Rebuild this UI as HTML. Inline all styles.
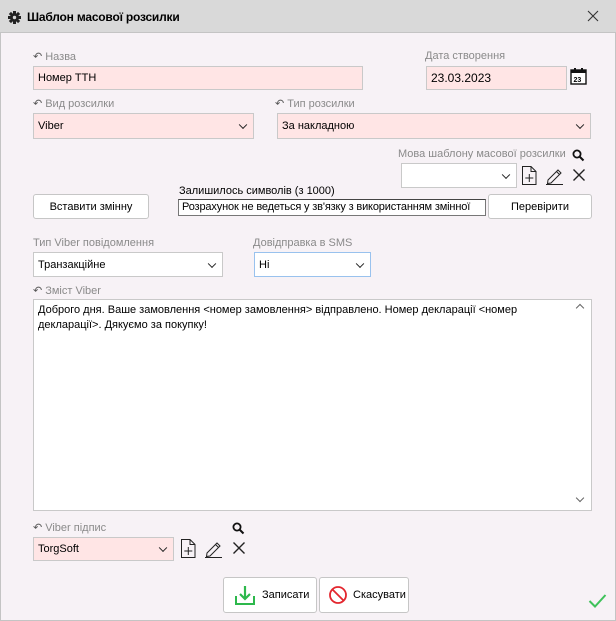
<!DOCTYPE html>
<html><head><meta charset="utf-8"><style>
*{box-sizing:border-box;margin:0;padding:0}
body{width:616px;height:621px;background:#f7f2f6;font-family:"Liberation Sans",sans-serif;font-size:11px;color:#000;position:relative;overflow:hidden}
.a{position:absolute}
.lbl{position:absolute;color:#8a8a8a;font-size:11px;white-space:nowrap}
.in{position:absolute;border:1px solid #c9c9c9;background:#ffe5e5;padding-left:4px;display:flex;align-items:center;white-space:nowrap;overflow:hidden}
.w{background:#fff}
.chev{position:absolute;right:7px;top:50%;width:6px;height:6px;border-right:1.6px solid #222;border-bottom:1.6px solid #222;transform:translateY(-70%) rotate(45deg)}
.btn{position:absolute;border:1px solid #c6c6c6;border-radius:3px;background:#fff;display:flex;align-items:center;justify-content:center;font-size:11px}
.ar{display:inline-block;margin-right:3px;color:#555}
</style></head><body>
<div class="a" style="left:0;top:0;width:616px;height:33px;background:#d9d9d9;border-bottom:1px solid #c4c4c4"></div>
<svg class="a" style="left:8px;top:11px" width="13" height="13" viewBox="0 0 13 13"><g fill="#222"><circle cx="6.5" cy="6.5" r="4.3"/><rect x="5" y="0" width="3" height="13"/><rect x="0" y="5" width="13" height="3"/><rect x="5" y="0" width="3" height="13" transform="rotate(45 6.5 6.5)"/><rect x="5" y="0" width="3" height="13" transform="rotate(-45 6.5 6.5)"/></g><circle cx="6.5" cy="6.5" r="1.7" fill="#d9d9d9"/></svg>
<div class="a" style="left:27px;top:10px;font-weight:bold;font-size:12px;letter-spacing:-0.2px">Шаблон масової розсилки</div>
<svg class="a" style="left:587px;top:10px" width="12" height="12"><path d="M1 1L11 11M11 1L1 11" stroke="#333" stroke-width="1.1"/></svg>
<div class="a" style="left:0;top:33px;width:1px;height:588px;background:#c4c4c4"></div>
<div class="a" style="right:0;top:33px;width:1px;height:588px;background:#c4c4c4"></div>
<div class="a" style="left:0;bottom:0;width:616px;height:1px;background:#c4c4c4"></div>

<div class="lbl" style="left:33px;top:50px"><span class="ar">↶</span>Назва</div>
<div class="in" style="left:33px;top:66px;width:330px;height:24px">Номер ТТН</div>
<div class="lbl" style="left:425px;top:50px">Дата створення</div>
<div class="in" style="left:426px;top:66px;width:141px;height:24px;font-size:12px">23.03.2023</div>
<svg class="a" style="left:570px;top:67px" width="17" height="18"><rect x="1" y="3" width="15" height="14" fill="#fff" stroke="#111" stroke-width="1.4"/><rect x="1" y="3" width="15" height="3" fill="#111"/><rect x="4" y="1" width="2" height="3" fill="#111"/><rect x="11" y="1" width="2" height="3" fill="#111"/><text x="3.5" y="15" font-size="7" font-weight="bold" font-family="Liberation Sans">23</text></svg>

<div class="lbl" style="left:33px;top:97px"><span class="ar">↶</span>Вид розсилки</div>
<div class="in" style="left:33px;top:113px;width:221px;height:26px">Viber<span class="chev"></span></div>
<div class="lbl" style="left:275px;top:97px"><span class="ar">↶</span>Тип розсилки</div>
<div class="in" style="left:277px;top:113px;width:314px;height:26px">За накладною<span class="chev"></span></div>

<div class="lbl" style="left:398px;top:148px">Мова шаблону масової розсилки</div>
<svg class="a" style="left:572px;top:149px" width="13" height="13"><circle cx="5" cy="5" r="3.6" fill="none" stroke="#111" stroke-width="1.8"/><path d="M7.5 7.5L11.5 11.5" stroke="#111" stroke-width="2"/></svg>
<div class="in w" style="left:401px;top:163px;width:116px;height:25px"><span class="chev"></span></div>
<svg class="a" style="left:521px;top:165px" width="17" height="21"><path d="M1.5 1.5H10L15 6.5V19.5H1.5Z M10 1.5V6.5H15" fill="none" stroke="#222" stroke-width="1"/><path d="M8.3 9V17M4.3 13H12.3" stroke="#222" stroke-width="1"/></svg>
<svg class="a" style="left:545px;top:165px" width="19" height="20"><path d="M3 15L13 5L16 8L6 18L2.5 18.5Z M11.5 6.5L14.5 9.5" fill="none" stroke="#222" stroke-width="1"/><path d="M1 19.5H18" stroke="#222" stroke-width="1"/></svg>
<svg class="a" style="left:572px;top:168px" width="14" height="14"><path d="M1.5 1.5L12.5 12.5M12.5 1.5L1.5 12.5" stroke="#222" stroke-width="1.4"/></svg>

<div class="a" style="left:179px;top:185px;font-size:11px">Залишилось символів (з 1000)</div>
<div class="btn" style="left:33px;top:194px;width:116px;height:25px">Вставити змінну</div>
<div class="a" style="left:178px;top:199px;width:308px;height:17px;border:1px solid #777;border-top-color:#444;background:#fff;font-size:11px;letter-spacing:-0.15px;padding-left:3px;white-space:nowrap;overflow:hidden;line-height:15px">Розрахунок не ведеться у зв'язку з використанням змінної</div>
<div class="btn" style="left:488px;top:194px;width:104px;height:25px">Перевірити</div>

<div class="lbl" style="left:33px;top:237px">Тип Viber повідомлення</div>
<div class="in w" style="left:33px;top:252px;width:190px;height:25px">Транзакційне<span class="chev"></span></div>
<div class="lbl" style="left:253px;top:237px">Довідправка в SMS</div>
<div class="in w" style="left:254px;top:252px;width:117px;height:25px;border-color:#99c2ee">Ні<span class="chev"></span></div>

<div class="lbl" style="left:33px;top:284px"><span class="ar">↶</span>Зміст Viber</div>
<div class="a" style="left:33px;top:299px;width:559px;height:212px;background:#fff;border:1px solid #c9c9c9;padding:3px 24px 0 4px;line-height:15px;font-size:11px">Доброго дня. Ваше замовлення &lt;номер замовлення&gt; відправлено. Номер декларації &lt;номер декларації&gt;. Дякуємо за покупку!</div>
<div class="a" style="left:577px;top:305px;width:6px;height:6px;border-left:1.4px solid #666;border-top:1.4px solid #666;transform:rotate(45deg)"></div>
<div class="a" style="left:577px;top:495px;width:6px;height:6px;border-right:1.4px solid #666;border-bottom:1.4px solid #666;transform:rotate(45deg)"></div>

<div class="lbl" style="left:33px;top:521px"><span class="ar">↶</span>Viber підпис</div>
<svg class="a" style="left:232px;top:522px" width="13" height="13"><circle cx="5" cy="5" r="3.6" fill="none" stroke="#111" stroke-width="1.8"/><path d="M7.5 7.5L11.5 11.5" stroke="#111" stroke-width="2"/></svg>
<div class="in" style="left:33px;top:537px;width:141px;height:24px">TorgSoft<span class="chev"></span></div>
<svg class="a" style="left:180px;top:538px" width="17" height="21"><path d="M1.5 1.5H10L15 6.5V19.5H1.5Z M10 1.5V6.5H15" fill="none" stroke="#222" stroke-width="1"/><path d="M8.3 9V17M4.3 13H12.3" stroke="#222" stroke-width="1"/></svg>
<svg class="a" style="left:204px;top:538px" width="19" height="20"><path d="M3 15L13 5L16 8L6 18L2.5 18.5Z M11.5 6.5L14.5 9.5" fill="none" stroke="#222" stroke-width="1"/><path d="M1 19.5H18" stroke="#222" stroke-width="1"/></svg>
<svg class="a" style="left:232px;top:541px" width="14" height="14"><path d="M1.5 1.5L12.5 12.5M12.5 1.5L1.5 12.5" stroke="#222" stroke-width="1.4"/></svg>

<div class="btn" style="left:223px;top:577px;width:94px;height:36px;justify-content:flex-start;padding-left:10px"><svg width="22" height="22" style="margin-right:6px"><path d="M2 12V20H20V12" fill="none" stroke="#2db84c" stroke-width="2"/><path d="M11 2V15M6 10L11 15L16 10" fill="none" stroke="#2db84c" stroke-width="2.2"/></svg>Записати</div>
<div class="btn" style="left:319px;top:577px;width:90px;height:36px;justify-content:flex-start;padding-left:8px"><svg width="20" height="20" style="margin-right:5px"><circle cx="10" cy="10" r="8" fill="none" stroke="#e3262e" stroke-width="1.8"/><path d="M4.5 4.5L15.5 15.5" stroke="#e3262e" stroke-width="1.8"/></svg>Скасувати</div>
<svg class="a" style="left:588px;top:593px" width="19" height="16"><path d="M1.5 8L7 13.5L17.5 2" fill="none" stroke="#3ec25a" stroke-width="2"/></svg>
</body></html>
